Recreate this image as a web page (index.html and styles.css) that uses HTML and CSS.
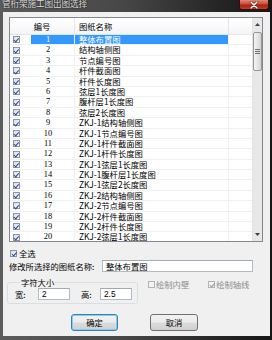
FILE: index.html
```html
<!DOCTYPE html>
<html lang="zh">
<head>
<meta charset="utf-8">
<title>管桁架施工图出图选择</title>
<link rel="stylesheet" href="styles.css">
</head>
<body>
<div class="win">
  <div class="titlebar">
    <span class="title">管桁架施工图出图选择</span>
    <div class="close">
      <svg width="10" height="8" viewBox="0 0 10 8"><path d="M2 1 L8 7 M8 1 L2 7" stroke="#5a1a12" stroke-width="2.6" stroke-linecap="round"/><path d="M2 1 L8 7 M8 1 L2 7" stroke="#fff" stroke-width="1.5" stroke-linecap="round"/></svg>
    </div>
  </div>
  <div class="client">
    <div class="listview">
      <div class="lv-main">
        <div class="lv-head">
          <div class="hc hc-num">编号</div>
          <div class="hc hc-name">图纸名称</div>
          <div class="hc hc-rest"></div>
        </div>
        <div class="lv-rows">
          <div class="row sel"><span class="c-cb"><i class="cb on"></i></span><span class="c-num">1</span><span class="c-name">整体布置图</span><span class="c-rest"></span></div>
          <div class="row"><span class="c-cb"><i class="cb on"></i></span><span class="c-num">2</span><span class="c-name">结构轴侧图</span><span class="c-rest"></span></div>
          <div class="row"><span class="c-cb"><i class="cb on"></i></span><span class="c-num">3</span><span class="c-name">节点编号图</span><span class="c-rest"></span></div>
          <div class="row"><span class="c-cb"><i class="cb on"></i></span><span class="c-num">4</span><span class="c-name">杆件截面图</span><span class="c-rest"></span></div>
          <div class="row"><span class="c-cb"><i class="cb on"></i></span><span class="c-num">5</span><span class="c-name">杆件长度图</span><span class="c-rest"></span></div>
          <div class="row"><span class="c-cb"><i class="cb on"></i></span><span class="c-num">6</span><span class="c-name">弦层1长度图</span><span class="c-rest"></span></div>
          <div class="row"><span class="c-cb"><i class="cb on"></i></span><span class="c-num">7</span><span class="c-name">腹杆层1长度图</span><span class="c-rest"></span></div>
          <div class="row"><span class="c-cb"><i class="cb on"></i></span><span class="c-num">8</span><span class="c-name">弦层2长度图</span><span class="c-rest"></span></div>
          <div class="row"><span class="c-cb"><i class="cb on"></i></span><span class="c-num">9</span><span class="c-name">ZKJ-1结构轴侧图</span><span class="c-rest"></span></div>
          <div class="row"><span class="c-cb"><i class="cb on"></i></span><span class="c-num">10</span><span class="c-name">ZKJ-1节点编号图</span><span class="c-rest"></span></div>
          <div class="row"><span class="c-cb"><i class="cb on"></i></span><span class="c-num">11</span><span class="c-name">ZKJ-1杆件截面图</span><span class="c-rest"></span></div>
          <div class="row"><span class="c-cb"><i class="cb on"></i></span><span class="c-num">12</span><span class="c-name">ZKJ-1杆件长度图</span><span class="c-rest"></span></div>
          <div class="row"><span class="c-cb"><i class="cb on"></i></span><span class="c-num">13</span><span class="c-name">ZKJ-1弦层1长度图</span><span class="c-rest"></span></div>
          <div class="row"><span class="c-cb"><i class="cb on"></i></span><span class="c-num">14</span><span class="c-name">ZKJ-1腹杆层1长度图</span><span class="c-rest"></span></div>
          <div class="row"><span class="c-cb"><i class="cb on"></i></span><span class="c-num">15</span><span class="c-name">ZKJ-1弦层2长度图</span><span class="c-rest"></span></div>
          <div class="row"><span class="c-cb"><i class="cb on"></i></span><span class="c-num">16</span><span class="c-name">ZKJ-2结构轴侧图</span><span class="c-rest"></span></div>
          <div class="row"><span class="c-cb"><i class="cb on"></i></span><span class="c-num">17</span><span class="c-name">ZKJ-2节点编号图</span><span class="c-rest"></span></div>
          <div class="row"><span class="c-cb"><i class="cb on"></i></span><span class="c-num">18</span><span class="c-name">ZKJ-2杆件截面图</span><span class="c-rest"></span></div>
          <div class="row"><span class="c-cb"><i class="cb on"></i></span><span class="c-num">19</span><span class="c-name">ZKJ-2杆件长度图</span><span class="c-rest"></span></div>
          <div class="row"><span class="c-cb"><i class="cb on"></i></span><span class="c-num">20</span><span class="c-name">ZKJ-2弦层1长度图</span><span class="c-rest"></span></div>
        </div>
      </div>
      <div class="vscroll">
        <div class="sb-btn"><svg width="5" height="3" viewBox="0 0 5 3"><path d="M0 3 L2.5 0 L5 3 Z" fill="#404040"/></svg></div>
        <div class="sb-track">
          <div class="sb-thumb"><span class="grip"></span></div>
        </div>
        <div class="sb-btn"><svg width="5" height="3" viewBox="0 0 5 3"><path d="M0 0 L5 0 L2.5 3 Z" fill="#404040"/></svg></div>
      </div>
    </div>

    <div class="selall">
      <i class="cb on"></i><span class="lbl">全选</span>
    </div>

    <div class="rename">
      <span class="rename-lbl">修改所选择的图纸名称:</span>
      <div class="edit edit-wide">整体布置图</div>
    </div>

    <div class="opts">
      <fieldset class="group">
        <legend>字符大小</legend>
        <div class="group-row">
          <span class="k k-w">宽:</span>
          <div class="edit edit-num">2</div>
          <span class="k k-h">高:</span>
          <div class="edit edit-num">2.5</div>
        </div>
      </fieldset>
      <div class="checks">
        <div class="chk dis"><i class="cb off"></i><span>绘制内壁</span></div>
        <div class="chk dis chk2"><i class="cb on"></i><span>绘制轴线</span></div>
      </div>
    </div>

    <div class="buttons">
      <div class="btn default">确定</div>
      <div class="btn">取消</div>
    </div>
  </div>
</div>
</body>
</html>
```

FILE: styles.css
```css
* { box-sizing: border-box; }

html, body {
  margin: 0;
  padding: 0;
}

body {
  width: 272px;
  height: 340px;
  overflow: hidden;
  font-family: "Noto Sans CJK SC", "Noto Sans", sans-serif;
  font-size: 8.3px;
  color: #000;
  background: #2a2a2a;
}

.win {
  width: 272px;
  height: 340px;
  display: flex;
  flex-direction: column;
  background: linear-gradient(to right, #5c5c5c 0%, #474747 45%, #262626 80%, #161616 100%);
}

.titlebar {
  height: 12px;
  display: flex;
  justify-content: space-between;
  align-items: flex-start;
}

.title {
  padding-left: 2px;
  margin-top: -2px;
  font-size: 8.6px;
  line-height: 10px;
  color: #dcdcdc;
  text-shadow: 0 0 2px #000;
  letter-spacing: -0.1px;
}

.close {
  width: 30px;
  height: 10px;
  margin-right: 3px;
  border: 1px solid #3b0d08;
  border-top: none;
  border-radius: 0 0 3px 3px;
  background: linear-gradient(#e0897c 0%, #cb4a38 45%, #a9230f 55%, #c0402a 100%);
  display: flex;
  align-items: center;
  justify-content: center;
}

.client {
  flex: 1;
  margin: 0 2px 4px 3px;
  background: #f0f0f0;
  padding: 5px 0 0 6px;
  display: flex;
  flex-direction: column;
  align-items: flex-start;
}

/* List view */
.listview {
  width: 254px;
  height: 225px;
  border: 1px solid #828790;
  background: #fff;
  display: flex;
  overflow: hidden;
}

.lv-main {
  width: 242px;
  overflow: hidden;
}

.lv-head {
  height: 17px;
  display: grid;
  grid-template-columns: 65px 154px 23px;
  background: linear-gradient(#ffffff, #fbfbfb 50%, #f3f4f6);
  border-bottom: 1px solid #e3e5e8;
}

.hc {
  line-height: 16px;
  border-right: 1px solid #e3e5e8;
  white-space: nowrap;
}

.hc-num { text-align: center; }
.hc-name { padding-left: 4px; }
.hc-rest { border-right: none; }

.row {
  height: 10.4px;
  display: grid;
  grid-template-columns: 21px 44px 154px 23px;
  border-bottom: 1px solid #f0f0f0;
  line-height: 9.4px;
  white-space: nowrap;
}

.c-cb {
  padding-left: 2.5px;
  display: flex;
  align-items: center;
}

.c-num {
  text-align: center;
  padding-right: 9px;
  font-family: "Liberation Serif", "Noto Sans CJK SC", serif;
  font-size: 8.4px;
  border-right: 1px solid #f0f0f0;
}

.c-name {
  padding-left: 4px;
  border-right: 1px solid #f0f0f0;
  overflow: hidden;
}

.row.sel .c-num,
.row.sel .c-name {
  background: #3399ff;
  color: #fff;
}

/* check boxes */
.cb {
  display: inline-block;
  width: 7px;
  height: 7px;
  border: 1px solid #8a95a8;
  background: linear-gradient(135deg, #d9dfe8, #f7f9fc);
  position: relative;
  flex: none;
}

.cb.on::after {
  content: "";
  position: absolute;
  left: 1.6px;
  top: 0.2px;
  width: 1.6px;
  height: 3.6px;
  border-right: 1.2px solid #2b4a95;
  border-bottom: 1.2px solid #2b4a95;
  transform: rotate(40deg);
}

/* scrollbar */
.vscroll {
  width: 10px;
  display: flex;
  flex-direction: column;
  background: #e8e8e8;
  border-left: 1px solid #e3e3e3;
}

.sb-btn {
  height: 13px;
  display: flex;
  align-items: center;
  justify-content: center;
}

.sb-track {
  flex: 1;
  padding-top: 1px;
}

.sb-thumb {
  height: 39px;
  border: 1px solid #979797;
  border-radius: 2px;
  background: linear-gradient(to right, #f3f3f3, #e6e6e6 50%, #d3d3d3);
  display: flex;
  align-items: center;
  justify-content: center;
}

.grip {
  width: 5px;
  height: 5px;
  background: repeating-linear-gradient(#6f6f6f 0 1px, transparent 1px 2px);
}

/* select all */
.selall {
  margin-top: 6px;
  margin-left: 1px;
  height: 10px;
  display: flex;
  align-items: center;
  gap: 2px;
}

.selall .lbl { line-height: 10px; }

/* rename */
.rename {
  margin-top: 2px;
  display: flex;
  align-items: center;
}

.rename-lbl {
  width: 93px;
  white-space: nowrap;
  line-height: 12px;
}

.edit {
  height: 12px;
  background: #fff;
  border: 1px solid #b5b9c1;
  border-top-color: #a4a8b0;
  line-height: 10px;
  padding-left: 3px;
  white-space: nowrap;
}

.edit-wide { width: 151px; }

/* options */
.opts {
  margin-top: 5px;
  margin-left: -2px;
  display: flex;
  align-items: flex-start;
}

.group {
  margin: 0;
  width: 131px;
  padding: 1px 5px 3px 7px;
  border: 1px solid #d5dfe5;
  border-radius: 3px;
  min-width: 0;
}

.group legend {
  padding: 0 1px;
  margin-left: 5px;
  line-height: 10px;
}

.group-row {
  display: flex;
  align-items: center;
}

.k { line-height: 12px; white-space: nowrap; }
.k-w { width: 23px; }
.k-h { width: 19px; margin-left: 11px; }

.edit-num {
  width: 32px;
  padding-left: 3px;
  font-family: "Liberation Sans", "Noto Sans CJK SC", sans-serif;
}

.checks {
  margin-top: 2px;
  margin-left: 10px;
  display: flex;
  align-items: center;
}

.chk {
  height: 10px;
  display: flex;
  align-items: center;
  gap: 1px;
  line-height: 10px;
  white-space: nowrap;
}

.chk.dis { color: #8d8d8d; }
.chk.dis .cb { border-color: #b3b3b3; background: #f4f4f4; }
.chk.dis .cb.on::after { border-color: #9a9a9a; }
.chk2 { margin-left: 19px; }

/* buttons */
.buttons {
  margin-top: 10px;
  margin-left: 62px;
  display: flex;
  gap: 32px;
}

.btn {
  width: 48px;
  height: 17px;
  border: 1px solid #707070;
  border-radius: 3px;
  background: linear-gradient(#f2f2f2 0%, #ebebeb 49%, #dddddd 51%, #cfcfcf 100%);
  text-align: center;
  line-height: 15px;
}

.btn.default {
  width: 47px;
  border-color: #3c7fb1;
  box-shadow: inset 0 0 0 1px #7fd0f5;
}
```
